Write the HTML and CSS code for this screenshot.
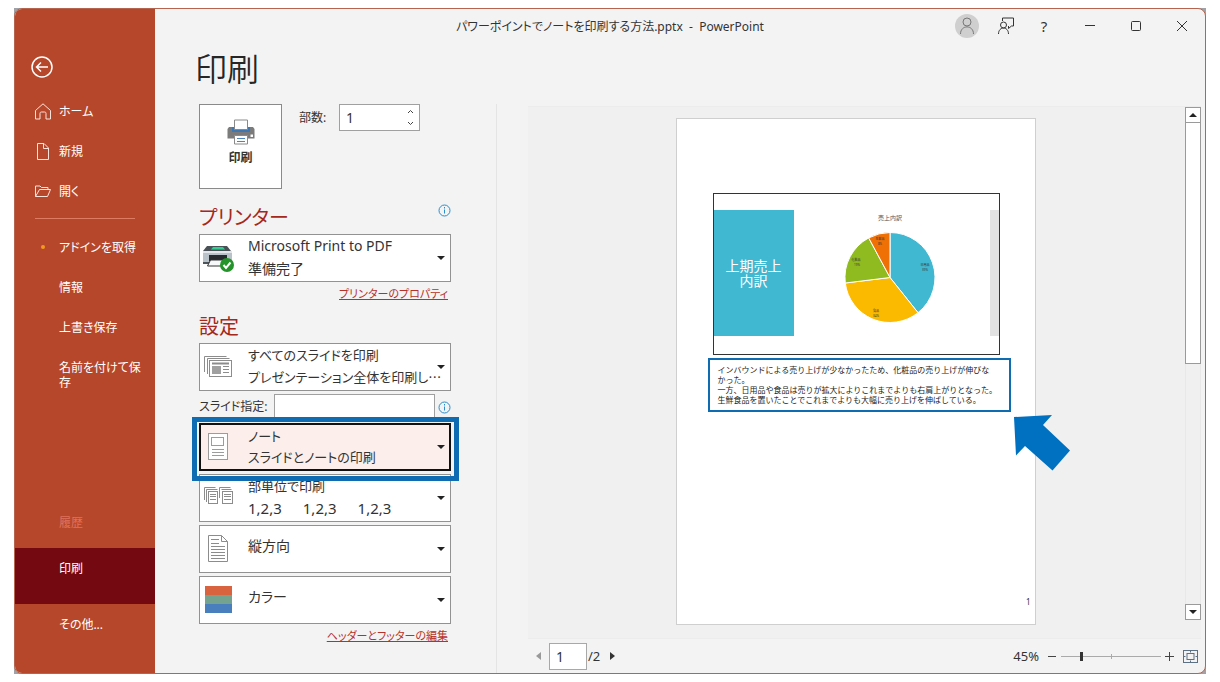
FILE: index.html
```html
<!DOCTYPE html>
<html lang="ja">
<head>
<meta charset="utf-8">
<meta name="viewport" content="width=device-width, initial-scale=1">
<title>パワーポイントでノートを印刷する方法.pptx - PowerPoint</title>
<link rel="stylesheet" href="styles.css">
</head>
<body>
<div class="frame">
<div class="window">
  <header class="titlebar">
    <div class="doc-title">パワーポイントでノートを印刷する方法.pptx&nbsp; -&nbsp; PowerPoint</div>
    <div class="title-actions">
      <button class="account" aria-label="アカウント"><svg width="24" height="24" viewBox="0 0 24 24"><circle cx="12" cy="8" r="4"/><path d="M5.500 20c0-9.500 13-9.500 13 0"/></svg></button>
      <button class="icon-button feedback" aria-label="フィードバック"><svg width="18" height="18" viewBox="0 0 18 18"><path d="M5.500 4v-3h11v8h-2l-3 2.500v-2.500"/><circle cx="6.500" cy="8" r="3"/><path d="M1.500 17c0-8 10-8 10 0"/></svg></button>
      <button class="icon-button help" aria-label="ヘルプ">?</button>
      <button class="icon-button" aria-label="最小化"><svg width="12" height="12" viewBox="0 0 12 12"><path d="M1 5.500h10"/></svg></button>
      <button class="icon-button" aria-label="最大化"><svg width="12" height="12" viewBox="0 0 12 12"><rect x="1.500" y="1.500" width="9" height="9" rx="1"/></svg></button>
      <button class="icon-button" aria-label="閉じる"><svg width="12" height="12" viewBox="0 0 12 12"><path d="M1 1l10 10M11 1L1 11"/></svg></button>
    </div>
  </header>

  <nav class="sidebar">
    <button class="back" aria-label="戻る"><svg width="22" height="22" viewBox="0 0 22 22"><circle cx="11" cy="11" r="10"/><path d="M17 11H5.500M10 6.500L5.500 11l4.500 4.500"/></svg></button>
    <a class="nav-item" href="#home"><svg width="16" height="17" viewBox="0 0 16 17"><path d="M.5 7.500L8 .8l7.500 6.700v8.500h-4.500v-5.500c0-1-.5-1.500-1.500-1.500h-3c-1 0-1.500.5-1.500 1.500v5.500H.5z"/></svg>ホーム</a>
    <a class="nav-item" href="#new"><svg width="16" height="17" viewBox="0 0 16 17"><path d="M2.500.5h6.500l4.500 4.500v11.500h-11zM8.500.5v5h5"/></svg>新規</a>
    <a class="nav-item" href="#open"><svg width="16" height="17" viewBox="0 0 16 17"><path d="M.5 13.500v-10.500h4.500l1.500 1.500h6.500v2M.5 13.500l4-7h11l-3 7z"/></svg>開く</a>
    <hr class="nav-rule">
    <a class="nav-item" href="#addins"><span class="dot"></span>アドインを取得</a>
    <a class="nav-item plain" href="#info">情報</a>
    <a class="nav-item plain" href="#save">上書き保存</a>
    <a class="nav-item plain" href="#saveas">名前を付けて保存</a>
    <span class="nav-item plain disabled">履歴</span>
    <a class="nav-item plain active" href="#print" aria-current="page">印刷</a>
    <a class="nav-item plain" href="#more">その他...</a>
  </nav>

  <main class="main">
    <h1>印刷</h1>
    <div class="columns">
      <section class="options">
        <div class="print-row">
          <button class="print-button">
            <svg width="28" height="26" viewBox="0 0 28 26"><path fill="#7b7b7b" d="M2 8h24l1.500 2v9.500H.5V10z"/><path fill="#3d78b3" d="M5 8h18v5H5z"/><path fill="#fff" stroke="#8a8a8a" d="M7.500 1h13v9.500h-13z"/><path fill="#fff" stroke="#8a8a8a" d="M7.500 16.500h13v8.500h-13z"/><path stroke="#4c84bd" d="M10 19.500h8M10 22.500h8"/><path fill="#fff" d="M23.500 15.500h2.500v2.500h-2.500z"/></svg>
            印刷
          </button>
          <label class="copies-label" for="copies">部数:</label>
          <div class="spinner">
            <input id="copies" type="text" inputmode="numeric" value="1">
            <div class="spin-buttons">
              <button aria-label="増やす"><svg width="7" height="5" viewBox="0 0 7 5"><path d="M1 4l2.500-2.500L6 4"/></svg></button>
              <button aria-label="減らす"><svg width="7" height="5" viewBox="0 0 7 5"><path d="M1 1l2.500 2.500L6 1"/></svg></button>
            </div>
          </div>
        </div>

        <div class="section-head">
          <h2>プリンター</h2>
          <button class="info" aria-label="プリンター情報"><svg width="13" height="13" viewBox="0 0 13 13"><circle cx="6.500" cy="6.500" r="5.500"/><path d="M6.500 5.500v4M6.500 3v1.500"/></svg></button>
        </div>
        <div class="picker latin">
          <select aria-label="プリンター" aria-describedby="printer-state"><option>Microsoft Print to PDF</option></select>
          <svg class="picker-icon" width="36" height="28" viewBox="0 0 36 28"><path fill="#4a5156" d="M8 2h20l4 5H4z"/><path fill="#2fcf92" d="M14 3h10l2 2.500H12z"/><path fill="#b9c1c9" d="M4 7h29v11H4z"/><path fill="#e3e7eb" d="M4 7h29v2H4z"/><path fill="#272b2f" d="M10 11h18v6H10z"/><path fill="#4d555c" d="M4 18h29v2H4z"/><path fill="#f7f9fa" stroke="#333" d="M11.500 16h13l2 6h-18z"/><circle cx="28" cy="21" r="7" fill="#249329"/><path fill="none" stroke="#fff" stroke-width="2" d="M24.500 21l2.500 3 4.500-5.500"/></svg>
          <span class="picker-note" id="printer-state">準備完了</span>
        </div>
        <a class="option-link" href="#printer-properties">プリンターのプロパティ</a>

        <div class="section-head"><h2>設定</h2></div>
        <div class="stack">
          <div class="picker">
            <select aria-label="印刷範囲" aria-describedby="range-note"><option>すべてのスライドを印刷</option></select>
            <svg class="picker-icon" width="36" height="28" viewBox="0 0 36 28" fill="none" stroke="#8c8c8c"><path d="M5.500 19V3.500h22M8.500 21V5.500h22"/><rect x="10.500" y="7.500" width="22" height="16" fill="#fff"/><path fill="#a0a0a0" stroke="none" d="M13 13h9v8h-9z"/><path stroke-width="2" d="M13 10.500h17"/><path d="M24 13.500h6M24 16.500h6M24 19.500h6"/></svg>
            <span class="picker-note" id="range-note">プレゼンテーション全体を印刷し…</span>
          </div>
          <div class="range-row">
            <label for="slides">スライド指定:</label>
            <input id="slides" type="text">
            <button class="info" aria-label="スライド指定の説明"><svg width="13" height="13" viewBox="0 0 13 13"><circle cx="6.500" cy="6.500" r="5.500"/><path d="M6.500 5.500v4M6.500 3v1.500"/></svg></button>
          </div>
          <div class="picker selected">
            <select aria-label="印刷レイアウト" aria-describedby="layout-note"><option>ノート</option></select>
            <svg class="picker-icon" width="36" height="28" viewBox="0 0 36 28" fill="none" stroke="#9c9c9c"><rect x="9.500" y=".5" width="19" height="26" fill="#fff"/><rect x="12.500" y="4.500" width="12" height="8"/><path d="M13 16.500h12M13 19.500h12M13 22.500h12"/></svg>
            <span class="picker-note" id="layout-note">スライドとノートの印刷</span>
          </div>
          <div class="picker">
            <select aria-label="部単位" aria-describedby="collate-note"><option>部単位で印刷</option></select>
            <svg class="picker-icon" width="36" height="28" viewBox="0 0 36 28" fill="none" stroke="#8c8c8c"><path d="M5.500 16V3.500h11M7.500 18V5.500h11M20.500 14V3.500h11M22.500 5.500h10"/><rect x="9.500" y="7.500" width="9" height="12" fill="#fff"/><rect x="23.500" y="7.500" width="10" height="12" fill="#fff"/><path d="M11 10.500h6M11 12.500h6M11 15.500h6M25 10.500h7M25 12.500h7M25 15.500h7"/></svg>
            <span class="picker-note sets" id="collate-note"><span>1,2,3</span><span>1,2,3</span><span>1,2,3</span></span>
          </div>
          <div class="picker single">
            <select aria-label="印刷の向き"><option>縦方向</option></select>
            <svg class="picker-icon" width="36" height="28" viewBox="0 0 36 28" fill="none" stroke="#8c8c8c"><path fill="#fff" d="M9.500.5h13l6 6v20h-19zM22.500.5v6h6"/><path d="M12 4.500h8M12 8.500h8M12 11.500h14M12 14.500h14M12 17.500h14M12 20.500h14M12 23.500h14"/></svg>
          </div>
          <div class="picker single">
            <select aria-label="カラー"><option>カラー</option></select>
            <svg class="picker-icon" width="36" height="28" viewBox="0 0 36 28"><path fill="#d9623f" d="M6 0h27v9H6z"/><path fill="#74a38f" d="M6 9h27v9H6z"/><path fill="#4a7fbd" d="M6 18h27v9H6z"/></svg>
          </div>
        </div>
        <a class="option-link" href="#header-footer">ヘッダーとフッターの編集</a>
      </section>

      <section class="preview">
        <div class="canvas">
          <div class="page-area">
            <article class="page">
              <div class="slide">
                <div class="slide-title"><span>上期売上</span><span>内訳</span></div>
                <svg class="chart" width="120" height="124" viewBox="0 0 120 124">
                  <text class="chart-title" x="60" y="10">売上内訳</text>
                  <g stroke="#fff">
                    <path fill="#41b8d2" d="M60 67.500V22.500A45 45 0 0 1 88 102.700z"/>
                    <path fill="#fbb900" d="M60 67.500L88 102.700A45 45 0 0 1 15.300 73z"/>
                    <path fill="#8fbb21" d="M60 67.500L15.300 73A45 45 0 0 1 38.700 27.900z"/>
                    <path fill="#ef7105" d="M60 67.500L38.700 27.900A45 45 0 0 1 60 22.500z"/>
                  </g>
                  <g class="chart-label">
                    <text x="95" y="56">日用品</text><text x="95" y="61">39%</text>
                    <text x="46" y="102">食品</text><text x="46" y="107">34%</text>
                    <text x="26" y="51">化粧品</text><text x="27" y="56">19%</text>
                    <text x="50" y="30">生鮮品</text><text x="50" y="35">8%</text>
                  </g>
                </svg>
                <div class="slide-edge"></div>
              </div>
              <p class="notes">インバウンドによる売り上げが少なかったため、化粧品の売り上げが伸びな<br>かった。<br>一方、日用品や食品は売りが拡大によりこれまでよりも右肩上がりとなった。<br>生鮮食品を置いたことでこれまでよりも大幅に売り上げを伸ばしている。</p>
              <span class="page-number">1</span>
              <svg class="arrow" width="58" height="58" viewBox="0 0 58 58"><path fill="#0070c0" d="M1 3L39 1 30 11 57 36.500 39.500 56.500 12 32 3 41.500z"/></svg>
            </article>
          </div>
          <div class="scrollbar">
            <button aria-label="上へ"><svg width="8" height="4" viewBox="0 0 8 4"><path d="M0 4l4-4 4 4z"/></svg></button>
            <div class="track"><div class="thumb"></div></div>
            <button aria-label="下へ"><svg width="8" height="4" viewBox="0 0 8 4"><path d="M0 0l4 4 4-4z"/></svg></button>
          </div>
        </div>
        <footer class="status">
          <button class="step muted" aria-label="前のページ"><svg width="5" height="8" viewBox="0 0 5 8"><path d="M5 0v8L0 4z"/></svg></button>
          <input class="page-input" type="text" value="1" aria-label="ページ">
          <span class="page-total">/2</span>
          <button class="step" aria-label="次のページ"><svg width="5" height="8" viewBox="0 0 5 8"><path d="M0 0v8l5-4z"/></svg></button>
          <div class="zoom">
            <label for="zoom">45%</label>
            <button class="zoom-button" aria-label="縮小"><svg width="9" height="9" viewBox="0 0 9 9"><path d="M1 4.500h8"/></svg></button>
            <input id="zoom" type="range" min="0" max="100" value="20">
            <button class="zoom-button" aria-label="拡大"><svg width="9" height="9" viewBox="0 0 9 9"><path d="M0 4.500h9M4.500 0v9"/></svg></button>
            <button class="zoom-button fit" aria-label="ページに合わせる"><svg width="15" height="13" viewBox="0 0 15 13"><rect x=".5" y=".5" width="14" height="12"/><rect x="4" y="3.500" width="7" height="6"/><path d="M7.500 1v1.500M7.500 10.500v1.500M1 6.500h1.500M12.500 6.500h1.500"/></svg></button>
          </div>
        </footer>
      </section>
    </div>
  </main>
</div>
</div>
</body>
</html>
```
FILE: styles.css
```css
* { box-sizing: border-box; }

body {
  margin: 0;
  min-height: 100vh;
  padding: 8px 14px;
  display: flex;
  background: #fff;
  color: #333;
  font: 12px/16px "Noto Sans", "Noto Sans CJK JP", sans-serif;
  font-feature-settings: "palt";
}

button, input, select { font: inherit; color: inherit; font-feature-settings: inherit; }
button { border: 0; padding: 0; background: none; display: flex; align-items: center; justify-content: center; }
svg { display: block; flex: none; }
h1, h2, p { margin: 0; font-weight: 400; }

.frame { flex: 1; display: flex; background: #9fa3a8; }

.window {
  flex: 1;
  display: grid;
  grid-template: 34px 1fr / 140px 1fr;
  border: 1px solid #b5654f;
  border-radius: 8px;
  overflow: hidden;
  background: #f3f3f3;
}

/* Title bar */
.titlebar {
  grid-area: 1 / 1 / 2 / 3;
  z-index: 1;
  display: grid;
  grid-template-columns: 1fr auto 1fr;
  align-items: center;
}
.doc-title { grid-column: 2; padding-top: 2px; white-space: nowrap; }
.title-actions { display: flex; justify-content: flex-end; align-items: center; padding-right: 17px; }
.account { width: 24px; height: 24px; border-radius: 12px; background: #cfcfcf; margin-right: 18px; }
.account svg { fill: none; stroke: #777; }
.icon-button { width: 12px; height: 24px; margin-left: 34px; }
.icon-button svg { fill: none; stroke: #333; }
.icon-button.feedback { width: 18px; margin-left: 0; }
.icon-button.help { margin-left: 23px; font-size: 15px; }

/* Sidebar */
.sidebar {
  grid-area: 1 / 1 / 3 / 2;
  display: flex;
  flex-direction: column;
  padding: 47px 0 29px;
  background: #b7472a;
  color: #fff;
}
.back { width: 22px; height: 22px; margin: 0 0 13px 16px; }
.back svg, .nav-item svg { fill: none; stroke: #fbe3dc; }
.back svg { stroke: #fff; stroke-width: 1.5; }
.nav-item {
  min-height: 40px;
  padding: 11px 8px 11px 20px;
  display: flex;
  align-items: center;
  gap: 8px;
  color: #fff;
  line-height: 15px;
  text-decoration: none;
}
.nav-item.plain { padding: 13px 8px 12px 44px; align-items: flex-start; }
.dot { width: 4px; height: 4px; margin: 0 6px; border-radius: 2px; background: #f39a1e; }
.nav-rule { width: 100px; height: 1px; margin: 7px 20px 8px; border: 0; background: #dd7c63; flex: none; }
.nav-item.disabled { margin-top: auto; min-height: 46px; color: #e0715c; }
.nav-item.active { min-height: 56px; background: #740912; }

/* Main */
.main { grid-area: 2 / 2 / 3 / 3; display: flex; flex-direction: column; min-width: 0; }
h1 { padding: 6px 0 15px 40px; color: #262626; font-size: 32px; font-weight: 350; line-height: 40px; }
.columns { flex: 1; display: grid; grid-template-columns: 342px 1fr; }
.options { padding: 0 45px 0 44px; border-right: 1px solid #e4e4e4; }

.print-row { display: flex; align-items: flex-start; }
.print-button {
  width: 83px;
  height: 85px;
  flex-direction: column;
  gap: 5px;
  padding-bottom: 9px;
  border: 1px solid #8a8a8a;
  background: #fff;
  font-weight: 700;
}
.print-button svg { fill: none; }
.copies-label { width: 40px; margin: 6px 0 0 17px; }
.spinner { width: 81px; height: 27px; display: flex; border: 1px solid #a0a0a0; background: #fff; }
.spinner input { flex: 1; min-width: 0; border: 0; padding: 0 0 0 6px; background: none; font-size: 14px; }
.spin-buttons { width: 17px; display: flex; flex-direction: column; }
.spin-buttons button { flex: 1; }
.spin-buttons svg, .info svg, .zoom-button svg { fill: none; stroke: #444; }

.section-head { display: flex; justify-content: space-between; padding-top: 15px; height: 45px; }
.option-link + .section-head { height: 41px; padding-top: 11px; }
h2 { color: #a5281c; font-size: 20px; line-height: 28px; }
.info { width: 13px; height: 13px; }
.info svg { stroke: #2a8dcc; }

.picker {
  position: relative;
  height: 48px;
  display: grid;
  grid-template-columns: 48px 1fr;
  grid-template-rows: 24px 24px;
  background: #fff;
  font-size: 13px;
}
.picker select {
  grid-area: 1 / 1 / 3 / 3;
  min-width: 0;
  appearance: none;
  border: 1px solid #929292;
  border-radius: 0;
  padding: 0 24px 24px 48px;
  background: none;
  line-height: 20px;
}
.picker::after {
  content: "";
  grid-area: 1 / 2 / 3 / 3;
  place-self: center end;
  margin-right: 6px;
  border: 4px solid transparent;
  border-top-color: #222;
  border-bottom: 0;
  pointer-events: none;
}
.picker-icon { grid-area: 1 / 1 / 3 / 2; place-self: center start; pointer-events: none; }
.picker-note {
  grid-area: 2 / 1 / 3 / 3;
  padding-left: 49px;
  font-family: "Noto Sans CJK JP", sans-serif;
  line-height: 20px;
  white-space: nowrap;
  pointer-events: none;
}
.picker.latin { font-size: 14px; }
.picker-note.sets { display: flex; gap: 21px; font-family: "Noto Sans", sans-serif; font-size: 15px; }
.picker.single { font-size: 14px; }
.picker.single select { padding-bottom: 6px; }
.picker.selected { background: #fcefeb; z-index: 1; }
.picker.selected::before {
  content: "";
  position: absolute;
  inset: -6px -8px -10px -7px;
  border: 5px solid #0f6cb3;
  pointer-events: none;
}
.picker.selected select { border: 2px solid #111; padding: 0 24px 22px 47px; }
.option-link {
  display: block;
  width: fit-content;
  margin: 4px 3px 0 auto;
  color: #b5322a;
  font-size: 11px;
  line-height: 16px;
  text-decoration: underline;
}

.stack { display: flex; flex-direction: column; gap: 3px; }
.range-row { display: flex; align-items: center; justify-content: space-between; height: 26px; }
.range-row label { width: 75px; white-space: nowrap; }
.range-row input { flex: 1; min-width: 0; height: 26px; margin-right: 3px; border: 1px solid #a0a0a0; }

/* Preview */
.preview { display: flex; flex-direction: column; min-width: 0; padding: 2px 4px 0 31px; }
.canvas { flex: 1; display: flex; background: #f0f0f0; border: solid #ececec; border-width: 1px 0; }
.page-area { flex: 1; display: flex; justify-content: center; padding: 11px 2px 13px 0; }
.page {
  position: relative;
  width: 360px;
  display: flex;
  flex-direction: column;
  padding: 74px 24px 16px 31px;
  border: 1px solid #cfcfcf;
  background: #fff;
}
.slide { width: 287px; height: 162px; margin-left: 5px; padding: 16px 0 18px; display: flex; border: 1px solid #333; }
.slide-title {
  width: 80px;
  display: flex;
  flex-direction: column;
  align-items: center;
  justify-content: center;
  background: #41b8d2;
  color: #fff;
  font-family: "Noto Sans CJK JP", sans-serif;
  font-size: 14px;
  font-feature-settings: normal;
  line-height: 15px;
}
.chart { margin-left: 36px; }
.chart text { text-anchor: middle; font-feature-settings: normal; }
.chart-title { fill: #555; font-size: 6px; }
.chart-label { fill: #333; font-size: 3px; }
.slide-edge { width: 9px; margin-left: auto; background: #e2e2e2; }
.notes {
  width: 303px;
  height: 54px;
  margin-top: 3px;
  padding: 5px 8px;
  border: 2px solid #0f6cb3;
  color: #222;
  font-size: 8px;
  font-feature-settings: normal;
  line-height: 10px;
}
.page-number { margin: auto -20px 0 0; align-self: flex-end; font-size: 8px; line-height: 12px; }
.arrow { position: absolute; top: 295px; right: -36px; }

.scrollbar { width: 16px; display: flex; flex-direction: column; margin-bottom: 18px; }
.scrollbar button { height: 16px; border: 1px solid #9a9a9a; background: #fff; }
.scrollbar svg { fill: #222; }
.track { flex: 1; border: solid #e8e8e8; border-width: 0 1px; }
.thumb { height: 50%; margin: 0 -1px; border: 1px solid #9a9a9a; border-top: 0; background: #fff; }

.status { height: 34px; display: flex; align-items: center; padding: 0 3px 0 8px; font-size: 13px; }
.step { width: 5px; height: 16px; }
.step svg { fill: #333; }
.step.muted svg { fill: #999; }
.page-input { width: 38px; height: 27px; margin-left: 8px; padding: 0 6px; border: 1px solid #a8a8a8; background: #fff; font-size: 14px; }
.page-total { margin: 0 10px 0 1px; }
.zoom { margin-left: auto; display: flex; align-items: center; }
.zoom label { margin-right: 8px; }
.zoom-button { height: 16px; }
#zoom {
  appearance: none;
  width: 100px;
  height: 9px;
  margin: 0 4px 0 5px;
  background: linear-gradient(#aaa, #aaa) no-repeat center / 100% 1px, linear-gradient(#aaa, #aaa) no-repeat center / 1px 5px;
}
#zoom::-webkit-slider-thumb { appearance: none; width: 3px; height: 9px; background: #333; }
.zoom-button.fit { margin-left: 9px; }
.zoom-button.fit svg { stroke: #5d7186; }
```
